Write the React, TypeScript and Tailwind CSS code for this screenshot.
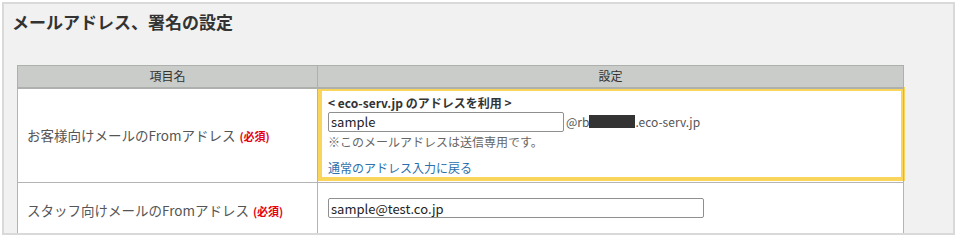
const font = { fontFamily: '"Noto Sans CJK JP", "Noto Sans", sans-serif' };

function Required() {
  return <span className="ml-[4px] text-[11px] font-bold text-[#e60012]">(必須)</span>;
}

export default function App() {
  return (
    <div className="bg-white pl-[2px] pt-[2px]" style={font}>
      <div className="h-[233px] w-[953px] overflow-hidden border-2 border-[#d9d9d9] bg-[#f0f1f0]">
        <h1 className="pl-[8px] pt-[6px] text-[17px] font-bold leading-[24px] text-[#333]">
          メールアドレス、署名の設定
        </h1>
        <table className="ml-[13px] mt-[31px] w-[887px] border-collapse bg-white text-[#555]">
          <thead>
            <tr className="h-[22px] bg-[#c9ccc9] text-[12px] font-normal text-[#333]">
              <th className="w-[300px] border border-[#aeb0ae] border-b-2 font-normal">項目名</th>
              <th className="border border-[#aeb0ae] border-b-2 font-normal">設定</th>
            </tr>
          </thead>
          <tbody>
            <tr className="h-[95px]">
              <td className="border border-[#b4b4b4] pl-[9px] text-[13.5px]">
                お客様向けメールのFromアドレス
                <Required />
              </td>
              <td className="border border-[#b4b4b4] p-0 align-top">
                <div className="-mt-[2px] mr-[-2px] h-[94px] border-4 border-[#f9d55b] pl-[6px] pt-[4px]">
                  <div className="text-[12px] font-bold leading-[16px] text-[#333]">
                    &lt;&nbsp;eco-serv.jp のアドレスを利用&nbsp;&gt;
                  </div>
                  <div className="mt-[1px] flex items-center text-[12px] text-[#555]">
                    <input
                      readOnly
                      value="sample"
                      className="h-[20px] w-[236px] rounded-[2px] border border-[#8f8f8f] px-[2px] text-[13px] text-[#222] outline-none"
                    />
                    <span className="ml-[2px]">@rb</span>
                    <span className="inline-block h-[13px] w-[46px] bg-[#333]" />
                    <span>.eco-serv.jp</span>
                  </div>
                  <div className="mt-[2px] text-[12px] leading-[16px] text-[#666]">
                    ※このメールアドレスは送信専用です。
                  </div>
                  <a className="mt-[10px] block text-[12px] leading-[16px] text-[#2b6fae]" href="#">
                    通常のアドレス入力に戻る
                  </a>
                </div>
              </td>
            </tr>
            <tr className="h-[56px]">
              <td className="border border-[#b4b4b4] pl-[9px] text-[13.5px]">
                スタッフ向けメールのFromアドレス
                <Required />
              </td>
              <td className="border border-[#b4b4b4] pl-[10px] align-top">
                <input
                  readOnly
                  value="sample@test.co.jp"
                  className="mt-[15px] h-[20px] w-[376px] rounded-[2px] border border-[#8f8f8f] px-[2px] text-[13px] text-[#222] outline-none"
                />
              </td>
            </tr>
          </tbody>
        </table>
      </div>
    </div>
  );
}
